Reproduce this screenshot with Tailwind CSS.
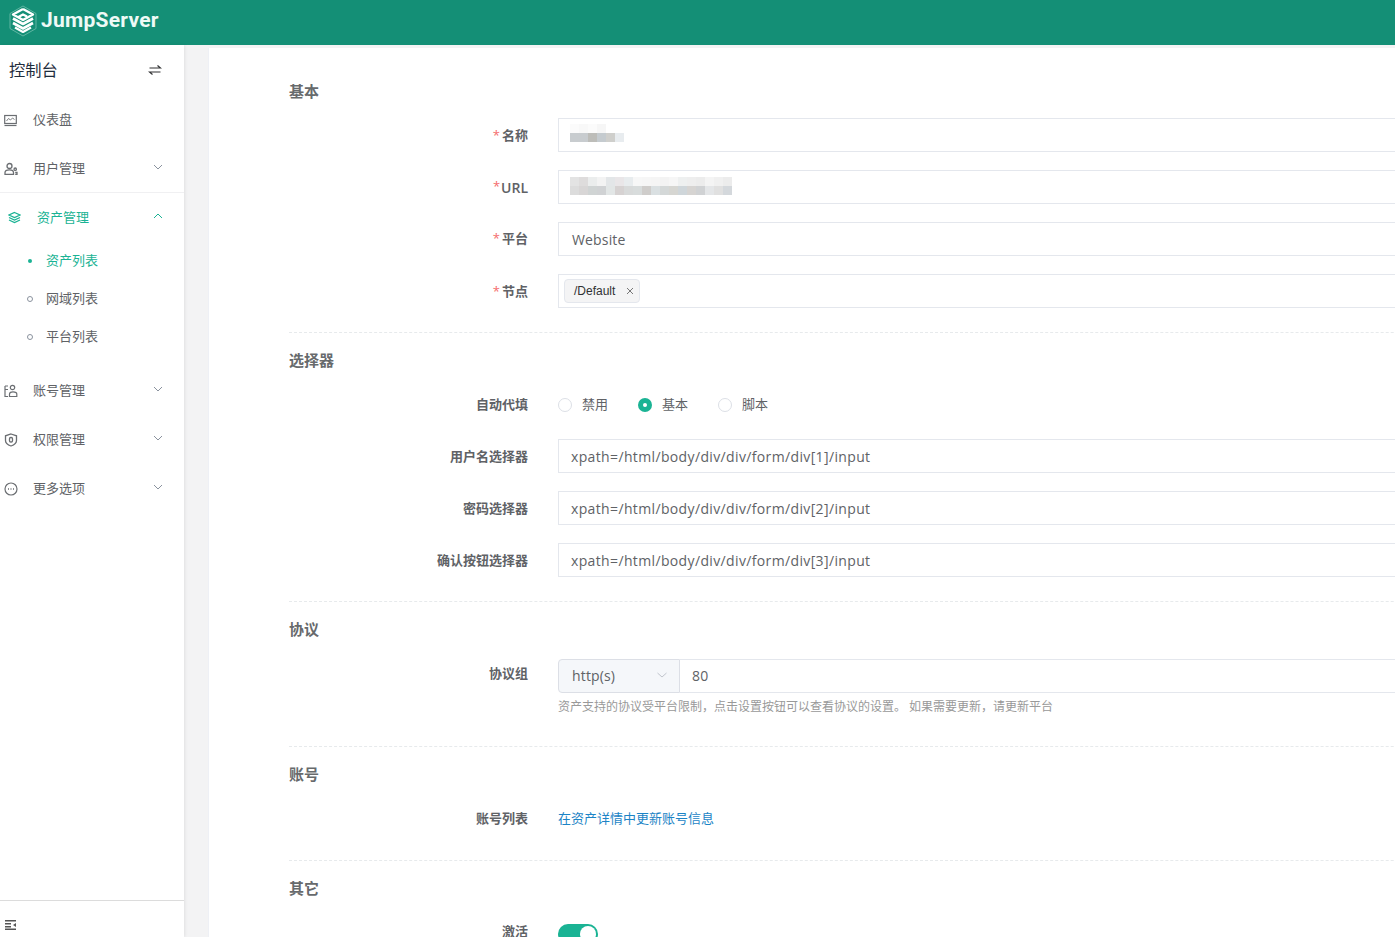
<!DOCTYPE html>
<html><head><meta charset="utf-8"><script src="https://cdn.jsdelivr.net/npm/@tailwindcss/browser@4"></script></head>
<body class="h-[937px] w-[1395px] overflow-hidden bg-[#f3f3f4] font-['Open_Sans','Noto_Sans_CJK_SC',sans-serif] text-[#606266]">
<header class="flex h-[45px] items-center bg-[#148f76] pb-[4px] pl-[9px]">
<svg class="h-[32px] w-[28px]" viewBox="0 0 28 32" fill="none"><path d="M14 1 L27 8.5 V23.5 L14 31 L1 23.5 V8.5 Z" stroke="#5fb5a2" stroke-width="1"/><path d="M14 4 L24 9.5 L14 15 L9 12.2 L14 9.5 L18 11.5 M14 4 L4 9.5 L8.5 12" stroke="#fff" stroke-width="2.4" stroke-linejoin="round"/><path d="M4 13.5 L14 19 L24 13.5" stroke="#fff" stroke-width="2.6" stroke-linejoin="round"/><path d="M4 18 L14 23.5 L24 18" stroke="#fff" stroke-width="2.6" stroke-linejoin="round"/><path d="M6 22.5 L14 27 L22 22.5" stroke="#fff" stroke-width="2.2" stroke-linejoin="round"/></svg>
<span class="ml-[4px] font-['Roboto',sans-serif] text-[21px] leading-none font-bold tracking-[0.25px] text-[#eefaf6]">JumpServer</span>
</header>
<div class="flex h-[892px]">
<aside class="flex w-[184px] shrink-0 flex-col bg-white text-[13px] shadow-[1px_0_3px_rgba(0,0,0,0.08)]">
<div class="flex h-[50px] shrink-0 items-center justify-between pl-[9px] pr-[22px] text-[16.3px] text-[#1f2d3d]">
<span>控制台</span>
<svg class="ml-[1px] h-[14px] w-[14px]" viewBox="0 0 14 14" fill="none" stroke="#303133" stroke-width="1.2"><path d="M1.5 5 H12.5 L9.5 2.5"/><path d="M12.5 9 H1.5 L4.5 11.5"/></svg>
</div>
<div class="flex h-[50px] shrink-0 items-center pl-[4px]">
<svg class="h-[13px] w-[13px]" viewBox="0 0 13 13" fill="none" stroke="#6b6e72" stroke-width="1.2"><rect x="0.7" y="1.5" width="11.6" height="8"/><path d="M2.5 7 L4.5 4.5 L6.5 6 L8.5 4 L10.5 5.5" stroke-width="0.9"/><path d="M0.5 11.5 H12.5"/></svg>
<span class="ml-[16px]">仪表盘</span>
</div>
<div class="flex h-[47px] shrink-0 items-center pl-[4px] pr-[21px]">
<svg class="h-[14px] w-[14px]" viewBox="0 0 14 14" fill="none" stroke="#6b6e72" stroke-width="1.3"><circle cx="5.5" cy="4" r="2.5"/><path d="M1 12.3 V10.5 C1 8.5 3 7.8 5.5 7.8 C8 7.8 9.5 8.5 9.5 10.5 V12.3 Z"/><circle cx="11.2" cy="7.2" r="1.2"/><path d="M11.2 10.5 H13 V12.3 H11.2"/></svg>
<span class="ml-[15px] flex-1">用户管理</span>
<svg class="mb-[3px] h-[10px] w-[10px]" viewBox="0 0 10 10" fill="none" stroke="#8a929e"><path d="M1 3 L5 7 L9 3"/></svg>
</div>
<div class="shrink-0 border-t border-[#f0f0f2]"></div>
<div class="flex h-[49px] shrink-0 items-center pl-[8px] pr-[21px] text-[#1ab394]">
<svg class="h-[13px] w-[13px]" viewBox="0 0 13 13" fill="none" stroke="#1ab394" stroke-width="1.3"><path d="M6.5 1.5 L12 4 L6.5 6.5 L1 4 Z"/><path d="M1 6.5 L6.5 9 L12 6.5"/><path d="M1 9 L6.5 11.5 L12 9"/></svg>
<span class="ml-[16px] flex-1">资产管理</span>
<svg class="mb-[4px] h-[10px] w-[10px]" viewBox="0 0 10 10" fill="none" stroke="#1ab394"><path d="M1 7 L5 3 L9 7"/></svg>
</div>
<div class="flex h-[38px] shrink-0 items-center pl-[28px] text-[#1ab394]"><span class="h-[4px] w-[4px] rounded-full bg-[#1ab394]"></span><span class="ml-[14px]">资产列表</span></div>
<div class="flex h-[38px] shrink-0 items-center pl-[27px]"><span class="h-[6px] w-[6px] rounded-full border border-[#8a929e]"></span><span class="ml-[13px]">网域列表</span></div>
<div class="flex h-[38px] shrink-0 items-center pl-[27px]"><span class="h-[6px] w-[6px] rounded-full border border-[#8a929e]"></span><span class="ml-[13px]">平台列表</span></div>
<div class="mt-[10px] flex h-[49px] shrink-0 items-center pl-[4px] pr-[21px]">
<svg class="h-[14px] w-[14px]" viewBox="0 0 14 14" fill="none" stroke="#6b6e72" stroke-width="1.2"><path d="M1 2 H4 M1 5.5 H4 M1 2 V12.5 H4"/><circle cx="8.5" cy="3.5" r="2.2"/><path d="M5.5 12.5 V10 C5.5 8.5 7 7.8 9 7.8 C11 7.8 12.8 8.5 12.8 10 V12.5 Z"/></svg>
<span class="ml-[15px] flex-1">账号管理</span>
<svg class="mb-[3px] h-[10px] w-[10px]" viewBox="0 0 10 10" fill="none" stroke="#8a929e"><path d="M1 3 L5 7 L9 3"/></svg>
</div>
<div class="flex h-[49px] shrink-0 items-center pl-[4px] pr-[21px]">
<svg class="h-[14px] w-[14px]" viewBox="0 0 14 14" fill="none" stroke="#6b6e72" stroke-width="1.3"><path d="M7 1 L12.5 2.8 V7.5 C12.5 10 10 12 7 13 C4 12 1.5 10 1.5 7.5 V2.8 Z"/><rect x="5.5" y="4.5" width="3" height="4.5" rx="1.3"/></svg>
<span class="ml-[15px] flex-1">权限管理</span>
<svg class="mb-[3px] h-[10px] w-[10px]" viewBox="0 0 10 10" fill="none" stroke="#8a929e"><path d="M1 3 L5 7 L9 3"/></svg>
</div>
<div class="flex h-[49px] shrink-0 items-center pl-[4px] pr-[21px]">
<svg class="h-[14px] w-[14px]" viewBox="0 0 14 14" fill="none" stroke="#6b6e72" stroke-width="1.2"><circle cx="7" cy="7" r="6"/><path d="M4 7 H5 M6.5 7 H7.5 M9 7 H10" stroke-width="1.3"/></svg>
<span class="ml-[15px] flex-1">更多选项</span>
<svg class="mb-[3px] h-[10px] w-[10px]" viewBox="0 0 10 10" fill="none" stroke="#8a929e"><path d="M1 3 L5 7 L9 3"/></svg>
</div>
<div class="mt-auto flex h-[37px] shrink-0 items-center border-t border-[#dcdcdc] pl-[5px]">
<svg class="mt-[12px] h-[10px] w-[11px]" viewBox="0 0 11 10" fill="#555"><path d="M0 0 H11 V1.5 H0 Z M0 3 H6 V4.5 H0 Z M0 6 H6 V7.5 H0 Z M0 8.5 H11 V10 H0 Z M11 3 V7 L8 5 Z"/></svg>
</div>
</aside>
<main class="ml-[24px] mt-[3px] min-w-0 flex-1 overflow-hidden border-l border-[#eef0f5] bg-white pl-[80px] pt-[31px] text-[13px]">
<div class="w-[1300px]">
<!-- basic -->
<h3 class="mb-[15px] flex h-[24px] items-center text-[15px] font-bold text-[#676a6c]">基本</h3>
<div class="mb-[18px] flex h-[34px]">
<label class="flex w-[239px] shrink-0 items-center justify-end pt-[2px] font-bold"><span class="mr-[2px] font-normal text-[#f56c6c]">*</span>名称</label>
<div class="ml-[30px] w-[1000px] border border-[#e4e7ed] pl-[11px] pt-[5px]">
<div class="flex h-[9px]"><span class="h-[9px] w-[9px] bg-[#fbfbfb]"></span><span class="h-[9px] w-[9px] bg-[#f8f8f8]"></span><span class="h-[9px] w-[9px] bg-[#fbfbfb]"></span><span class="h-[9px] w-[9px] bg-[#f6f6f6]"></span></div>
<div class="flex h-[9px]"><span class="h-[9px] w-[9px] bg-[#c8cccf]"></span><span class="h-[9px] w-[9px] bg-[#c8cccf]"></span><span class="h-[9px] w-[9px] bg-[#bdbdb9]"></span><span class="h-[9px] w-[9px] bg-[#c5cbcf]"></span><span class="h-[9px] w-[9px] bg-[#cfcfcc]"></span><span class="h-[9px] w-[9px] bg-[#e8ecef]"></span></div>
</div>
</div>
<div class="mb-[18px] flex h-[34px]">
<label class="flex w-[239px] shrink-0 items-center justify-end text-[14px] font-semibold"><span class="mr-[1px] text-[13px] font-normal text-[#f56c6c]">*</span>URL</label>
<div class="ml-[30px] w-[1000px] border border-[#e4e7ed] pl-[11px] pt-[6px]">
<div class="flex h-[9px]"><span class="h-[9px] w-[9px] bg-[#e3e3e3]"></span><span class="h-[9px] w-[9px] bg-[#dedcdc]"></span><span class="h-[9px] w-[9px] bg-[#ebeded]"></span><span class="h-[9px] w-[9px] bg-[#f3f3f3]"></span><span class="h-[9px] w-[9px] bg-[#e3e6e8]"></span><span class="h-[9px] w-[9px] bg-[#e9e6e8]"></span><span class="h-[9px] w-[9px] bg-[#e8ecee]"></span><span class="h-[9px] w-[9px] bg-[#f7f7f7]"></span><span class="h-[9px] w-[9px] bg-[#f6f6f6]"></span><span class="h-[9px] w-[9px] bg-[#f5f5f5]"></span><span class="h-[9px] w-[9px] bg-[#f3f3f3]"></span><span class="h-[9px] w-[9px] bg-[#f6f6f6]"></span><span class="h-[9px] w-[9px] bg-[#eef0f0]"></span><span class="h-[9px] w-[9px] bg-[#eeeeee]"></span><span class="h-[9px] w-[9px] bg-[#ececec]"></span><span class="h-[9px] w-[9px] bg-[#f4f4f4]"></span><span class="h-[9px] w-[9px] bg-[#f0f0f0]"></span><span class="h-[9px] w-[9px] bg-[#ececec]"></span></div>
<div class="flex h-[9px]"><span class="h-[9px] w-[9px] bg-[#dcdcdc]"></span><span class="h-[9px] w-[9px] bg-[#d8d6d6]"></span><span class="h-[9px] w-[9px] bg-[#d0d4d4]"></span><span class="h-[9px] w-[9px] bg-[#d0d2d4]"></span><span class="h-[9px] w-[9px] bg-[#e2e6e6]"></span><span class="h-[9px] w-[9px] bg-[#d6d2d2]"></span><span class="h-[9px] w-[9px] bg-[#d8dada]"></span><span class="h-[9px] w-[9px] bg-[#d8dcdc]"></span><span class="h-[9px] w-[9px] bg-[#cfcdcb]"></span><span class="h-[9px] w-[9px] bg-[#dae0e2]"></span><span class="h-[9px] w-[9px] bg-[#d4d8d8]"></span><span class="h-[9px] w-[9px] bg-[#d6d6d2]"></span><span class="h-[9px] w-[9px] bg-[#cfd6da]"></span><span class="h-[9px] w-[9px] bg-[#d6d4d2]"></span><span class="h-[9px] w-[9px] bg-[#d0d2d4]"></span><span class="h-[9px] w-[9px] bg-[#e4e6e8]"></span><span class="h-[9px] w-[9px] bg-[#e0e0e0]"></span><span class="h-[9px] w-[9px] bg-[#d4d8dc]"></span></div>
</div>
</div>
<div class="mb-[18px] flex h-[34px]">
<label class="flex w-[239px] shrink-0 items-center justify-end font-bold"><span class="mr-[2px] font-normal text-[#f56c6c]">*</span>平台</label>
<div class="ml-[30px] flex w-[1000px] items-center border border-[#e4e7ed] pl-[13px] text-[14px] tracking-[0.15px]">Website</div>
</div>
<div class="mb-[24px] flex h-[34px]">
<label class="flex w-[239px] shrink-0 items-center justify-end pt-[2px] font-bold"><span class="mr-[2px] font-normal text-[#f56c6c]">*</span>节点</label>
<div class="ml-[30px] flex w-[1000px] items-center border border-[#e4e7ed] pl-[5px]">
<span class="flex h-[24px] w-[76px] items-center rounded-[4px] border border-[#e4e7ed] bg-[#f4f4f5] pl-[9px] font-['Liberation_Sans',sans-serif] text-[12px] text-[#303133]">/Default<svg class="ml-[11px] h-[8px] w-[8px]" viewBox="0 0 8 8" stroke="#777" fill="none"><path d="M1 1 L7 7 M7 1 L1 7"/></svg></span>
</div>
</div>
<div class="mb-[15px] border-t border-dashed border-[#e7eaec]"></div>
<!-- selector -->
<h3 class="mb-[15px] flex h-[24px] items-center text-[15px] font-bold text-[#676a6c]">选择器</h3>
<div class="mb-[18px] flex h-[34px]">
<label class="flex w-[239px] shrink-0 items-center justify-end pt-[2px] font-bold">自动代填</label>
<div class="ml-[30px] flex items-center pt-[2px]">
<span class="h-[14px] w-[14px] rounded-full border border-[#dcdfe6]"></span><span class="ml-[10px]">禁用</span>
<span class="ml-[30px] flex h-[14px] w-[14px] items-center justify-center rounded-full bg-[#1ab394]"><span class="h-[4px] w-[4px] rounded-full bg-white"></span></span><span class="ml-[10px]">基本</span>
<span class="ml-[30px] h-[14px] w-[14px] rounded-full border border-[#dcdfe6]"></span><span class="ml-[10px]">脚本</span>
</div>
</div>
<div class="mb-[18px] flex h-[34px]">
<label class="flex w-[239px] shrink-0 items-center justify-end pt-[2px] font-bold">用户名选择器</label>
<div class="ml-[30px] flex w-[1000px] items-center border border-[#e4e7ed] pl-[12px] text-[14px] tracking-[0.36px]">xpath=/html/body/div/div/form/div[1]/input</div>
</div>
<div class="mb-[18px] flex h-[34px]">
<label class="flex w-[239px] shrink-0 items-center justify-end pt-[2px] font-bold">密码选择器</label>
<div class="ml-[30px] flex w-[1000px] items-center border border-[#e4e7ed] pl-[12px] text-[14px] tracking-[0.36px]">xpath=/html/body/div/div/form/div[2]/input</div>
</div>
<div class="mb-[24px] flex h-[34px]">
<label class="flex w-[239px] shrink-0 items-center justify-end pt-[2px] font-bold">确认按钮选择器</label>
<div class="ml-[30px] flex w-[1000px] items-center border border-[#e4e7ed] pl-[12px] text-[14px] tracking-[0.36px]">xpath=/html/body/div/div/form/div[3]/input</div>
</div>
<div class="mb-[15px] border-t border-dashed border-[#e7eaec]"></div>
<!-- protocol -->
<h3 class="mb-[18px] flex h-[24px] items-center text-[15px] font-bold text-[#676a6c]">协议</h3>
<div class="flex h-[34px]">
<label class="flex w-[239px] shrink-0 items-center justify-end pb-[4px] font-bold">协议组</label>
<div class="ml-[30px] flex w-[1000px] text-[14px]">
<div class="flex w-[122px] items-center justify-between rounded-l-[4px] border border-[#dcdfe6] bg-[#f5f7fa] pb-[2px] pl-[13px] pr-[12px] tracking-[0.15px]">http(s)<svg class="h-[10px] w-[10px]" viewBox="0 0 10 10" fill="none" stroke="#c0c4cc"><path d="M0.5 3 L5 7 L9.5 3"/></svg></div>
<div class="flex flex-1 items-center border-y border-r border-[#e4e7ed] pb-[2px] pl-[12px] tracking-[0.3px]">80</div>
</div>
</div>
<div class="ml-[269px] mb-[33px] flex h-[20px] items-center pt-[8px] text-[12px] text-[#999]">资产支持的协议受平台限制，点击设置按钮可以查看协议的设置。 如果需要更新，请更新平台</div>
<div class="mb-[15px] border-t border-dashed border-[#e7eaec]"></div>
<!-- account -->
<h3 class="mb-[16px] flex h-[24px] items-center pt-[1px] text-[15px] font-bold text-[#676a6c]">账号</h3>
<div class="mb-[24px] flex h-[34px]">
<label class="flex w-[239px] shrink-0 items-center justify-end font-bold">账号列表</label>
<div class="ml-[30px] flex items-center text-[#1c84c6]">在资产详情中更新账号信息</div>
</div>
<div class="mb-[15px] border-t border-dashed border-[#e7eaec]"></div>
<!-- other -->
<h3 class="mb-[15px] flex h-[24px] items-center pt-[1px] text-[15px] font-bold text-[#676a6c]">其它</h3>
<div class="flex h-[34px]">
<label class="flex w-[239px] shrink-0 items-center justify-end font-bold">激活</label>
<div class="ml-[30px] pt-[9px]"><span class="flex h-[20px] w-[40px] items-center justify-end rounded-full bg-[#1ab394] pr-[2px]"><span class="h-[16px] w-[16px] rounded-full bg-white"></span></span></div>
</div>
</div>
</main>
</div>
</body></html>
